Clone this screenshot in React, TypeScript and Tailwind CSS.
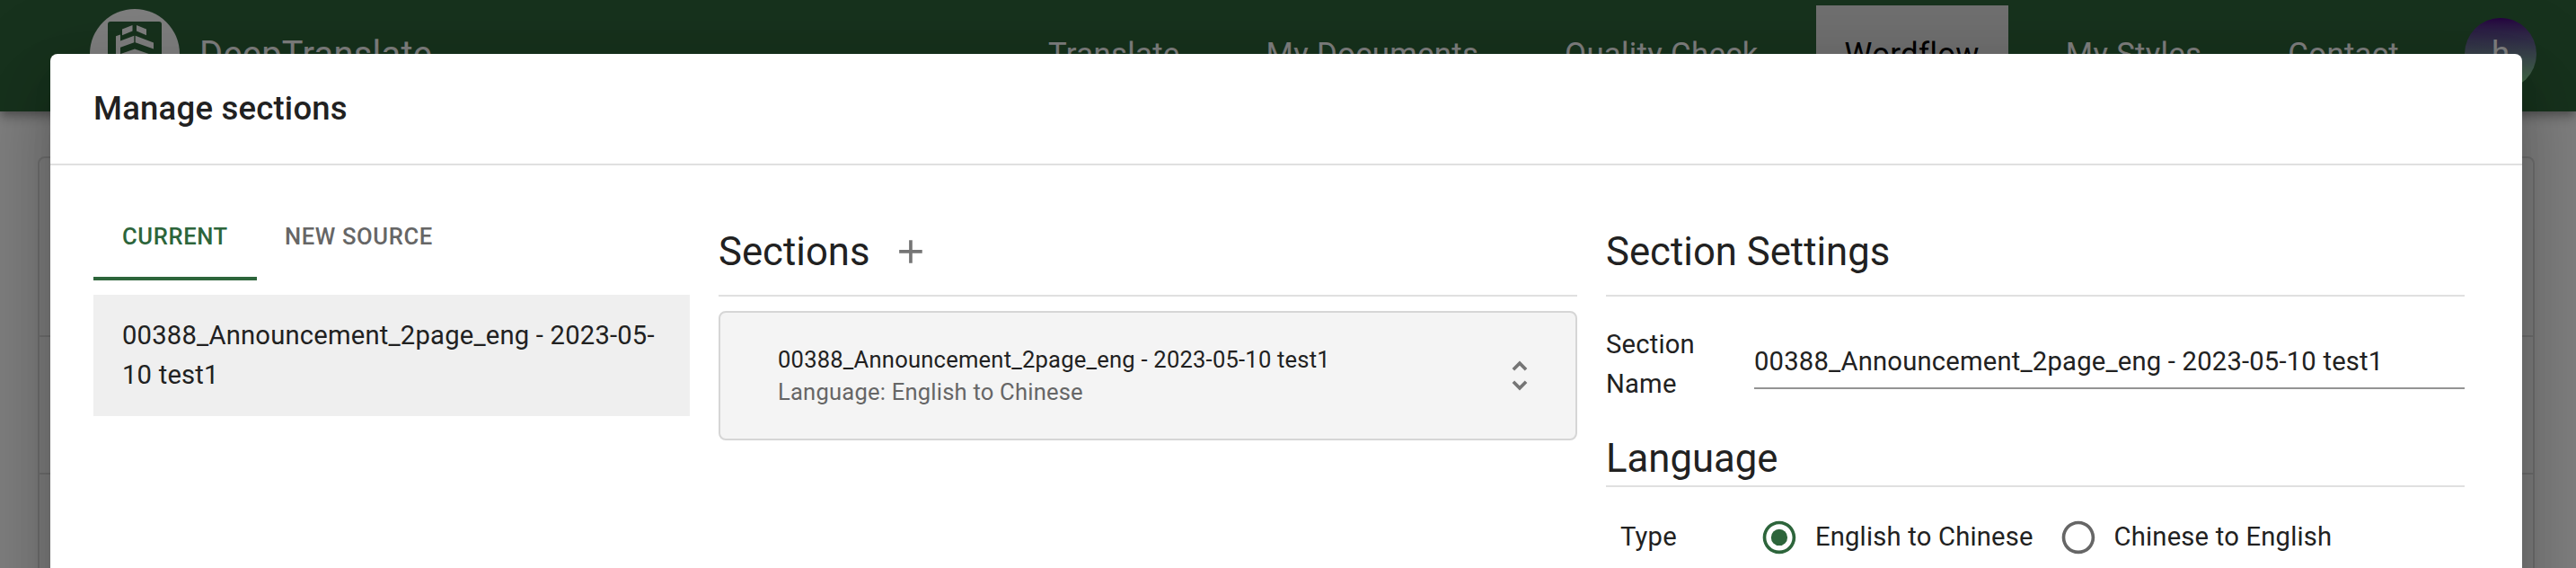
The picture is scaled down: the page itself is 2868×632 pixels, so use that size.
import type { ReactNode } from "react";

const FILE_NAME = "00388_Announcement_2page_eng - 2023-05-10 test1";

function Logo() {
  return (
    <svg width="100" height="100" viewBox="100 10 100 100" className="block shrink-0">
      <circle cx="150" cy="60" r="50" fill="#ffffff" />
      <rect x="120" y="24" width="60" height="72" rx="3" fill="#2f653b" />
      <g fill="#ffffff">
        <path d="M136 32.5 147.5 28v6.6L136 39.2z" />
        <path d="M152 28 163 32.5v6.7L152 34.6z" />
        <path d="M129 40.2 134 38.4v7.2L149.3 39.8v7.4L134 52.8v7.2H129z" />
        <path d="M150.7 39.8 171 47.6v7L150.7 47.2z" />
        <path d="M130 61.5 150 54.5 170 61.5V69L150 62 130 69z" />
      </g>
    </svg>
  );
}

function NavItem({ children, active = false }: { children: ReactNode; active?: boolean }) {
  return (
    <div
      className={
        active
          ? "flex h-[108px] items-center bg-[#e0e0e0] px-8 text-black"
          : "flex h-[108px] items-center px-8 text-white"
      }
    >
      <span>{children}</span>
    </div>
  );
}

function PageBehind() {
  return (
    <div className="flex h-full flex-col bg-white">
      <header className="z-10 flex h-[124px] shrink-0 items-center bg-[#2f653b] pr-11 pb-1 pl-[100px] shadow-[0_4px_8px_-2px_rgba(0,0,0,0.2),0_8px_10px_0_rgba(0,0,0,0.14),0_2px_20px_0_rgba(0,0,0,0.12)]">
        <Logo />
        <span className="ml-[22px] pt-px text-[39.8px] tracking-[0.0075em] text-white">DeepTranslate</span>
        <nav className="ml-auto flex items-center gap-8 text-[34.74px] tracking-[0.00938em]">
          <NavItem>Translate</NavItem>
          <NavItem>My Documents</NavItem>
          <NavItem>Quality Check</NavItem>
          <NavItem active>Wordflow</NavItem>
          <NavItem>My Styles</NavItem>
          <NavItem>Contact</NavItem>
        </nav>
        <div className="ml-[41px] flex size-20 items-center justify-center rounded-full bg-linear-to-b from-[#4b0082] to-[#90ee90] text-[36.57px] text-white">
          <span>h</span>
        </div>
      </header>
      <div className="mt-[50px] mr-[46px] ml-[42px] flex grow flex-col rounded-t-lg border-x-2 border-t-2 border-black/12">
        <div className="h-[197px] shrink-0" />
        <div className="h-[153px] shrink-0 border-t-2 border-black/12" />
        <div className="grow border-t-2 border-black/12" />
      </div>
    </div>
  );
}

function Tabs() {
  return (
    <div className="flex h-24 text-[25.6px] font-medium tracking-[0.024em]">
      <div className="flex w-[182px] items-center border-b-4 border-[#2d653b] pt-1 pl-8 text-[#2d653b]">
        <span>CURRENT</span>
      </div>
      <div className="flex items-center pl-[31px] text-[#666666]">
        <span>NEW SOURCE</span>
      </div>
    </div>
  );
}

function Heading({ children }: { children: ReactNode }) {
  return <h2 className="text-[43.7px] leading-[58.5px] tracking-normal">{children}</h2>;
}

function Radio({ label, checked = false }: { label: string; checked?: boolean }) {
  return (
    <label className="flex items-center">
      <svg
        width="43.89"
        height="43.89"
        viewBox="0 0 24 24"
        className={checked ? "block text-[#2d653b]" : "block text-[#666666]"}
        fill="currentColor"
      >
        <path d="M12 2C6.48 2 2 6.48 2 12s4.48 10 10 10 10-4.48 10-10S17.52 2 12 2zm0 18c-4.42 0-8-3.58-8-8s3.58-8 8-8 8 3.58 8 8-3.58 8-8 8z" />
        {checked && <circle cx="12" cy="12" r="5" />}
      </svg>
      <span className="ml-[18px]">{label}</span>
    </label>
  );
}

function Dialog() {
  return (
    <div className="absolute top-[60px] right-[60px] left-[56px] flex h-[700px] flex-col rounded-lg bg-white text-[29.2px] leading-[43.89px] tracking-[0.007em] text-[#212121] shadow-[0_22px_30px_-14px_rgba(0,0,0,0.2),0_48px_76px_6px_rgba(0,0,0,0.14),0_18px_92px_16px_rgba(0,0,0,0.12)]">
      <div className="flex h-[124px] shrink-0 items-center border-b-2 border-[#e0e0e0] px-12">
        <h1 className="text-[36.5px] font-medium tracking-[0.006em]">Manage sections</h1>
      </div>
      <div className="flex gap-8 pt-8 pl-12">
        <div className="w-[664px] shrink-0">
          <Tabs />
          <div className="mt-4 h-[135px] bg-[#efefef] px-8 pt-6">
            <p>{FILE_NAME}</p>
          </div>
        </div>
        <div className="w-[956px] shrink-0">
          <div className="flex h-[114px] items-center border-b-2 border-[#e0e0e0] pt-4">
            <Heading>Sections</Heading>
            <svg width="43.89" height="43.89" viewBox="0 0 24 24" fill="#757575" className="ml-6 block">
              <path d="M19 13h-6v6h-2v-6H5v-2h6V5h2v6h6v2z" />
            </svg>
          </div>
          <div className="mt-4 flex h-36 items-center justify-between rounded-lg border-2 border-[#d6d6d6] bg-[#f4f4f4] pr-10 pl-16 text-[25.55px] leading-9 tracking-[0.0085em]">
            <div>
              <p>{FILE_NAME}</p>
              <p className="text-[#666666]">Language: English to Chinese</p>
            </div>
            <svg width="43.89" height="43.89" viewBox="0 0 24 24" fill="#757575" className="block">
              <path d="M12 5.83 15.17 9l1.41-1.41L12 3 7.41 7.59 8.83 9 12 5.83zm0 12.34L8.83 15l-1.41 1.41L12 21l4.59-4.59L15.17 15 12 18.17z" />
            </svg>
          </div>
        </div>
        <div className="w-[956px] shrink-0">
          <div className="flex h-[114px] items-center border-b-2 border-[#e0e0e0] pt-4">
            <Heading>Section Settings</Heading>
          </div>
          <div className="mt-8 flex">
            <div className="w-[165px] shrink-0 pr-10">Section Name</div>
            <div className="mt-[19px] h-[52px] grow border-b-2 border-[#949494]">{FILE_NAME}</div>
          </div>
          <div className="mt-[31px] h-[61px] border-b-2 border-[#e0e0e0]">
            <Heading>Language</Heading>
          </div>
          <div className="mt-[34px] flex items-center pl-4">
            <span className="w-[155px]">Type</span>
            <Radio label="English to Chinese" checked />
            <div className="w-[28px]" />
            <Radio label="Chinese to English" />
          </div>
        </div>
      </div>
    </div>
  );
}

export default function App() {
  return (
    <div className="relative h-[632px] w-full overflow-hidden font-['Roboto',sans-serif]">
      <PageBehind />
      <div className="absolute inset-0 z-20 bg-black/50">
        <Dialog />
      </div>
    </div>
  );
}
